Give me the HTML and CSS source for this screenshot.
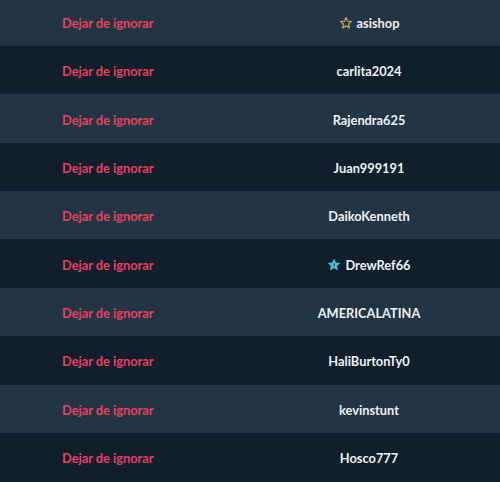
FILE: index.html
```html
<!DOCTYPE html>
<html lang="es">
<head>
<meta charset="utf-8">
<link rel="stylesheet" href="styles.css">
</head>
<body>
<div class="list">
  <div class="row"><a class="unignore">Dejar de ignorar</a><span class="user"><svg class="star" viewBox="0 0 24 24"><path d="M12 2.8l2.7 6.1 6.6.6-5 4.4 1.5 6.5L12 17l-5.8 3.4 1.5-6.5-5-4.4 6.6-.6z" fill="none" stroke="#c9a064" stroke-width="2.2" stroke-linejoin="round"/></svg>asishop</span></div>
  <div class="row"><a class="unignore">Dejar de ignorar</a><span class="user">carlita2024</span></div>
  <div class="row"><a class="unignore">Dejar de ignorar</a><span class="user">Rajendra625</span></div>
  <div class="row"><a class="unignore">Dejar de ignorar</a><span class="user">Juan999191</span></div>
  <div class="row"><a class="unignore">Dejar de ignorar</a><span class="user">DaikoKenneth</span></div>
  <div class="row"><a class="unignore">Dejar de ignorar</a><span class="user"><svg class="star" viewBox="0 0 24 24"><path d="M12 2.2l2.8 6.3 6.8.6-5.2 4.5 1.6 6.7L12 16.8l-6 3.5 1.6-6.7-5.2-4.5 6.8-.6z" fill="#4fc6d6" stroke="#4fc6d6" stroke-width="1.2" stroke-linejoin="round"/><path d="M11.2 10.5l1.3-.7v5" fill="none" stroke="#13202e" stroke-width="1.4"/></svg>DrewRef66</span></div>
  <div class="row"><a class="unignore">Dejar de ignorar</a><span class="user">AMERICALATINA</span></div>
  <div class="row"><a class="unignore">Dejar de ignorar</a><span class="user">HaliBurtonTy0</span></div>
  <div class="row"><a class="unignore">Dejar de ignorar</a><span class="user">kevinstunt</span></div>
  <div class="row"><a class="unignore">Dejar de ignorar</a><span class="user">Hosco777</span></div>
</div>
</body>
</html>
```
FILE: styles.css
```css
html, body {
  margin: 0;
  padding: 0;
  background: #111f2d;
  overflow: hidden;
}
.list {
  margin-top: -2.4px;
  font-family: Lato, "Noto Sans", sans-serif;
  font-weight: 700;
  font-size: 12.8px;
}
.row {
  display: grid;
  grid-template-columns: 238px 1fr;
  align-items: center;
  height: 48.375px;
  padding-top: 2px;
  box-sizing: border-box;
}
.row:nth-child(odd) {
  background: #223545;
}
.row:nth-child(even) {
  background: #111f2d;
}
.unignore {
  padding-left: 62px;
  color: #e8405f;
}
.user {
  display: flex;
  justify-content: center;
  align-items: center;
  gap: 4px;
  color: #eef1f4;
}
.star {
  width: 14px;
  height: 14px;
}
```
